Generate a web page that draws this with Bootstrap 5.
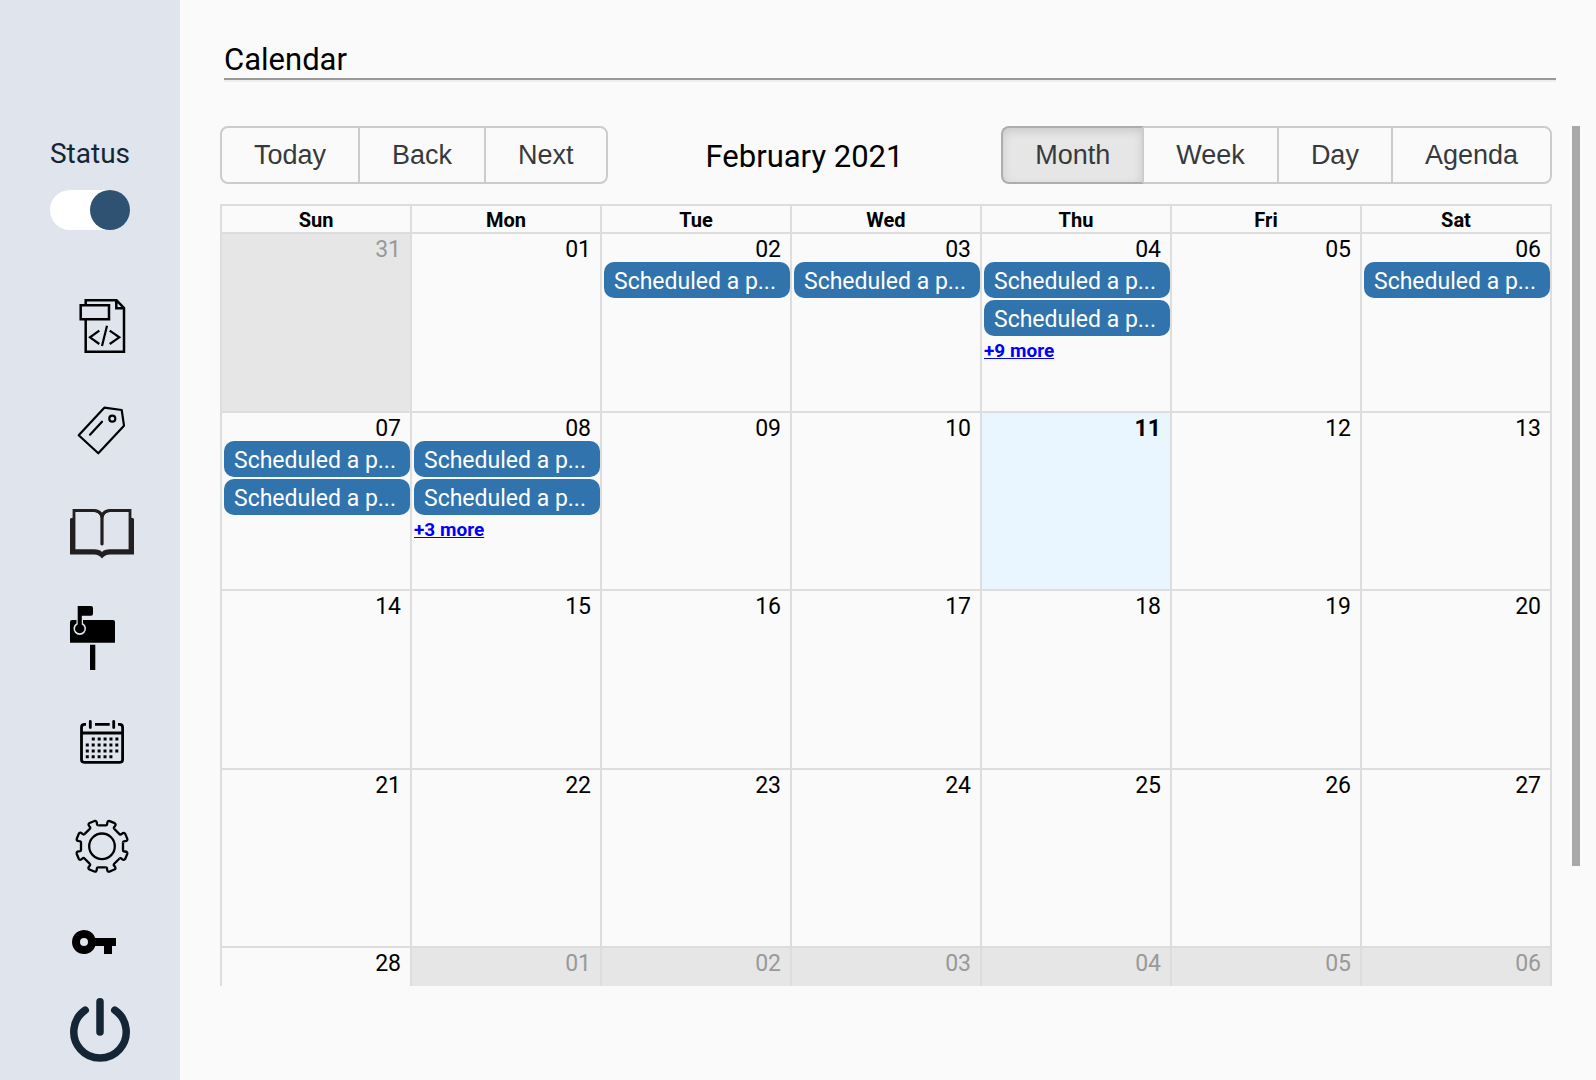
<!DOCTYPE html>
<html lang="en">
<head>
<meta charset="utf-8">
<meta name="viewport" content="width=device-width, initial-scale=1">
<title>Calendar</title>
<link href="https://cdn.jsdelivr.net/npm/bootstrap@5.3.0/dist/css/bootstrap.min.css" rel="stylesheet">
<style>
  body { font-family: Roboto, "Open Sans", sans-serif; background: #fafafa; color: #000; }
  .side { width: 180px; background: #dfe4ed; padding-top: 134px; }
  .status-label { font-size: 28px; line-height: 40px; color: #142636; }
  .status-switch.form-check-input {
    width: 80px; height: 40px; margin: 0; border: 0; border-radius: 20px; background: #fff; position: relative;
  }
  .status-switch.form-check-input::after {
    content: ""; position: absolute; top: 0; left: 0; width: 40px; height: 40px; border-radius: 50%; background: #2f5172;
  }
  .status-switch.form-check-input:checked { background: #fff; }
  .status-switch.form-check-input:checked::after { left: auto; right: 0; }
  .side-links { margin-top: 56px; padding-left: 70px; gap: 24px; }
  .side-links a { display: block; padding: 8px 0; color: #000; }
  .side-links a.tight { padding: 0; }
  .side-links svg { display: block; width: 64px; height: 64px; }
  .page { padding: 42px 16px 0 40px; }
  .page-head { margin: 0 24px 46px 4px; border-bottom: 2px solid #999; box-shadow: 0 2px 0 #eee; }
  .page-head h1 { font-size: 31px; line-height: 36px; font-weight: 400; margin: 0; }
  .scroll-area { height: calc(100vh - 220px); gap: 20px; }
  .scroll-view { overflow: hidden; }
  .scroll-bar { width: 8px; height: 86%; background: #a8a8a8; }
  .cal-tools { margin-bottom: 20px; }
  .cal-tools h2 { font-size: 31px; line-height: 40px; font-weight: 400; margin: 0; padding-top: 4px; }
  .cal-tools .btn {
    --bs-btn-font-family: "Liberation Sans", Arial, sans-serif;
    --bs-btn-font-size: 27px; --bs-btn-line-height: 30px;
    --bs-btn-padding-x: 32px; --bs-btn-padding-y: 12px;
    --bs-btn-color: #373a3c; --bs-btn-border-color: #ccc; --bs-btn-border-width: 2px; --bs-btn-border-radius: 8px;
    --bs-btn-hover-bg: #e6e6e6; --bs-btn-hover-border-color: #adadad;
    --bs-btn-active-bg: #e6e6e6; --bs-btn-active-color: #373a3c; --bs-btn-active-border-color: #adadad;
    --bs-btn-active-shadow: none;
  }
  .cal-tools .btn-group > .btn:not(:first-child) { margin-left: -2px; }
  .cal-tools .btn.active { box-shadow: inset 0 3px 10px rgba(0,0,0,.13); border-right-color: #ccc; }
  .cal { width: 100%; height: 921px; table-layout: fixed; border-collapse: separate; border-spacing: 0; border-right: 2px solid #ddd; }
  .cal th, .cal td { border: 0 solid #ddd; border-width: 2px 0 0 2px; padding: 0; vertical-align: top; }
  .cal th { height: 28px; padding-top: 2px; font-size: 20px; line-height: 24px; font-weight: 700; text-align: center; }
  .cal td { height: 20%; }
  .cal .off { background: #e6e6e6; }
  .cal .off .day { color: #999; }
  .cal .now { background: #eaf6ff; }
  .cal .now .day { font-weight: 700; }
  .day { font-size: 23px; line-height: 24px; text-align: right; padding: 4px 9px 0 0; }
  .event {
    display: block; width: calc(100% - 2px); margin: 0 0 2px 2px; padding: 4px 0 0 10px; border: 0; border-radius: 10px;
    background: #3174ad; color: #fff; font-size: 23px; line-height: 32px; text-align: left; white-space: nowrap; overflow: hidden;
  }
  .more { display: block; margin-left: 2px; font-size: 19px; line-height: 26px; font-weight: 700; color: #00f; }
</style>
</head>
<body>
<div class="d-flex min-vh-100">
  <nav class="side flex-shrink-0" aria-label="Main">
    <div class="d-flex flex-column align-items-center gap-3">
      <label class="status-label" for="status">Status</label>
      <input class="form-check-input status-switch" type="checkbox" role="switch" id="status" checked>
    </div>
    <ul class="side-links list-unstyled d-flex flex-column mb-0">
      <li><a href="#" aria-label="Code"><svg viewBox="0 0 64 64" fill="none" stroke="currentColor" stroke-width="2.5"><path d="M15.7 11V6.3H46.5L54 14V57.7H15.7V26M46.3 6.5V14.3H54"/><path d="M10.7 11.3H39V25.3H10.7Z"/><path d="M29.3 36.7L20 43.3L29.3 50M37 31.7L32 52M39.7 36.7L49.3 43.3L39.7 50" stroke-width="2.2"/></svg></a></li>
      <li><a href="#" aria-label="Tags"><svg viewBox="0 0 64 64" fill="none" stroke="currentColor" stroke-width="2.2" stroke-linejoin="round" stroke-linecap="round"><path d="M34.3 9.7L51.7 12L54 27.7L28.3 55.3L8.7 37.3ZM32 23.7L20 36.7"/><circle cx="42.3" cy="20.7" r="3"/></svg></a></li>
      <li><a href="#" aria-label="Library"><svg viewBox="0 0 64 64" fill="#231f20"><path d="M4 48V8.5H24Q30 8.8 32 14Q34 8.8 40 8.5H60V48" fill="none" stroke="#231f20" stroke-width="2.8"/><path d="M25 7.5Q30 8 32 11Q34 8 39 7.5V9.7Q34 11 33.6 16V42.5Q32 44.5 30.4 42.5V16Q30 11 25 9.7Z"/><path d="M0 17Q1 15.5 5 15.5V47.3H24Q30 47.3 32 50Q34 47.3 40 47.3H59V15.5Q63 15.5 64 17V52.4H40Q35 52.6 32 56.4Q29 52.6 24 52.4H0Z"/></svg></a></li>
      <li><a href="#" aria-label="Mailbox"><svg viewBox="0 0 64 64" fill="currentColor"><path d="M2 14H43Q45 14 45 16V36.7H0V16Q0 14 2 14ZM20 38.7H25.3V64H20Z"/><path d="M6.5 13H13V17.2A6.3 6.3 0 1 1 6.5 17.2Z" fill="#dfe4ed"/><path d="M7.7 0H21Q23 0 23 2V7.7Q23 9.7 21 9.7H11.8V18.4A4.7 4.7 0 1 1 7.7 18.4Z"/></svg></a></li>
      <li><a href="#" aria-label="Calendar"><svg viewBox="0 0 64 64" fill="none" stroke="currentColor" stroke-width="2.8"><path d="M16 14.4H14.5Q11.5 14.4 11.5 17.4V49.4Q11.5 52.4 14.5 52.4H49.6Q52.6 52.4 52.6 49.4V17.4Q52.6 14.4 49.6 14.4H48M25 14.4H39.7M11.5 23H52.6"/><path d="M20.3 11.4V17.6M43.7 11.4V17.6" stroke-linecap="round"/><path d="M21.8 29H49M15.8 35H49M15.8 40.9H49M15.8 46.8H43" stroke-width="3" stroke-dasharray="3 2.9"/></svg></a></li>
      <li><a href="#" aria-label="Settings"><svg viewBox="0 0 64 64" fill="none" stroke="currentColor" stroke-width="2.3"><defs><path id="tooth" d="M-3.8-21H3.7Q5.2-21 5.2-22.8Q5.4-26 7.7-25.2L12.6-23.2Q14.5-22 12.8-20Q11.2-18.6 12.2-17.5"/></defs><g transform="translate(32 32.3)"><circle r="12.8"/><use href="#tooth"/><use href="#tooth" transform="rotate(45)"/><use href="#tooth" transform="rotate(90)"/><use href="#tooth" transform="rotate(135)"/><use href="#tooth" transform="rotate(180)"/><use href="#tooth" transform="rotate(225)"/><use href="#tooth" transform="rotate(270)"/><use href="#tooth" transform="rotate(315)"/></g></svg></a></li>
      <li><a class="tight" href="#" aria-label="Password"><svg viewBox="0 0 64 64" fill="currentColor"><path fill-rule="evenodd" d="M25.3 28A12 12 0 1 0 25.3 36H34V44H42V36H46V28ZM14 28A4 4 0 1 1 14 36A4 4 0 1 1 14 28Z"/></svg></a></li>
      <li><a class="tight" href="#" aria-label="Log out"><svg viewBox="0 0 64 64" fill="none" stroke="#142636" stroke-width="7.5" stroke-linecap="round"><path d="M15.2 12.2A26.2 26.2 0 1 0 44.8 12.2M30 3.8V34"/></svg></a></li>
    </ul>
  </nav>

  <main class="page flex-grow-1">
    <header class="page-head"><h1>Calendar</h1></header>
    <div class="scroll-area d-flex">
      <div class="scroll-view flex-grow-1">
        <div class="cal-tools d-flex justify-content-between align-items-center">
          <div class="btn-group">
            <button type="button" class="btn">Today</button>
            <button type="button" class="btn">Back</button>
            <button type="button" class="btn">Next</button>
          </div>
          <h2>February 2021</h2>
          <div class="btn-group">
            <button type="button" class="btn active">Month</button>
            <button type="button" class="btn">Week</button>
            <button type="button" class="btn">Day</button>
            <button type="button" class="btn">Agenda</button>
          </div>
        </div>
        <table class="cal">
          <thead>
            <tr><th scope="col">Sun</th><th scope="col">Mon</th><th scope="col">Tue</th><th scope="col">Wed</th><th scope="col">Thu</th><th scope="col">Fri</th><th scope="col">Sat</th></tr>
          </thead>
          <tbody>
            <tr>
              <td class="off"><div class="day">31</div></td>
              <td><div class="day">01</div></td>
              <td><div class="day">02</div><button type="button" class="event">Scheduled a p...</button></td>
              <td><div class="day">03</div><button type="button" class="event">Scheduled a p...</button></td>
              <td><div class="day">04</div><button type="button" class="event">Scheduled a p...</button><button type="button" class="event">Scheduled a p...</button><a href="#" class="more">+9 more</a></td>
              <td><div class="day">05</div></td>
              <td><div class="day">06</div><button type="button" class="event">Scheduled a p...</button></td>
            </tr>
            <tr>
              <td><div class="day">07</div><button type="button" class="event">Scheduled a p...</button><button type="button" class="event">Scheduled a p...</button></td>
              <td><div class="day">08</div><button type="button" class="event">Scheduled a p...</button><button type="button" class="event">Scheduled a p...</button><a href="#" class="more">+3 more</a></td>
              <td><div class="day">09</div></td>
              <td><div class="day">10</div></td>
              <td class="now"><div class="day">11</div></td>
              <td><div class="day">12</div></td>
              <td><div class="day">13</div></td>
            </tr>
            <tr>
              <td><div class="day">14</div></td><td><div class="day">15</div></td><td><div class="day">16</div></td><td><div class="day">17</div></td><td><div class="day">18</div></td><td><div class="day">19</div></td><td><div class="day">20</div></td>
            </tr>
            <tr>
              <td><div class="day">21</div></td><td><div class="day">22</div></td><td><div class="day">23</div></td><td><div class="day">24</div></td><td><div class="day">25</div></td><td><div class="day">26</div></td><td><div class="day">27</div></td>
            </tr>
            <tr>
              <td><div class="day">28</div></td><td class="off"><div class="day">01</div></td><td class="off"><div class="day">02</div></td><td class="off"><div class="day">03</div></td><td class="off"><div class="day">04</div></td><td class="off"><div class="day">05</div></td><td class="off"><div class="day">06</div></td>
            </tr>
          </tbody>
        </table>
      </div>
      <div class="scroll-bar flex-shrink-0"></div>
    </div>
  </main>
</div>
<script src="https://cdn.jsdelivr.net/npm/bootstrap@5.3.0/dist/js/bootstrap.bundle.min.js"></script>
</body>
</html>
